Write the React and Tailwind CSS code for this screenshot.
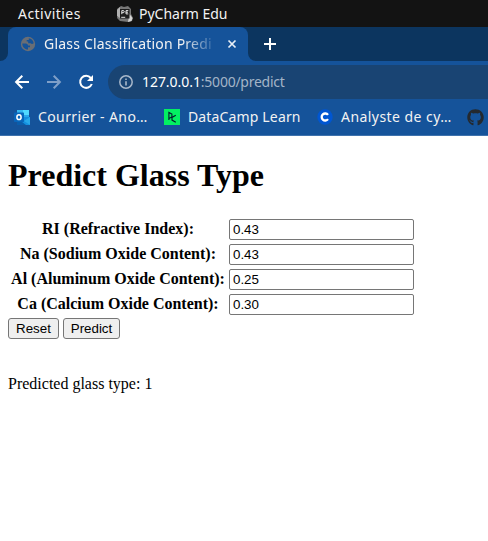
import React from 'react';
import { FaGithub } from 'react-icons/fa';

const UI = "font-['Noto_Sans',sans-serif]";

function PyCharmIcon() {
  return (
    <svg width="16" height="16" viewBox="0 0 16 16">
      <path d="M0 3 4 0l3 1 4-1 3 3v5l2 4-1 3-4 1-8-1-3-3 1-5z" fill="#777" />
      <path d="M12.500 8l3 4-1 3-3.500 1z" fill="#d6d6d6" />
      <path d="M0 4l3-3v11l-3-2z" fill="#b0b0b0" />
      <rect x="3" y="3" width="9.500" height="9.500" fill="#1c1c1c" />
      <path d="M4.800 8.200V4.600h1.400a1 1 0 0 1 0 2.100H4.800M11.300 4.600H9v3.300h2.300M9 6.200h2" stroke="#e5e5e5" fill="none" />
      <path d="M4.200 11.300h4" stroke="#e5e5e5" />
    </svg>
  );
}

function GlobeIcon() {
  return (
    <svg width="16" height="16" viewBox="0 0 16 16">
      <circle cx="8" cy="8" r="7.200" fill="#6a6e75" />
      <path d="M2.300 7.500h3.400c1.600 0 2.300 1 2.300 2h2v1.700H8v2.300C4.800 13.500 2.300 11 2.300 7.500zM8.800 2.300c2.500.3 4.500 2.300 4.900 4.900-.8.900-2.500.9-3 .1H8.200V5.500H6.700V4h2.100z" fill="#15539a" />
    </svg>
  );
}

function OutlookIcon() {
  return (
    <svg width="17" height="16" viewBox="0 0 17 16">
      <g transform="translate(0 1)">
        <path d="M3 0h12v9H3z" fill="#28a8ea" />
        <path d="M9 0h6v5H9z" fill="#50d9ff" />
        <path d="M3 0h6v5H3z" fill="#35b8f1" />
        <path d="M3 7h13v8H3z" fill="#1490df" />
        <path d="M16 7v8l-6-4z" fill="#28a8ea" />
        <path d="M3 8l9 7H3z" fill="#0a5dab" />
        <rect x="0" y="2.500" width="10" height="9.500" rx=".7" fill="#0866bb" />
        <ellipse cx="5" cy="7.200" rx="2.100" ry="2.400" fill="none" stroke="#fff" strokeWidth="1.500" />
      </g>
    </svg>
  );
}

function DataCampIcon() {
  return (
    <svg width="16" height="16" viewBox="0 0 16 16">
      <path d="M0 0h16v16H0z" fill="#03ef62" />
      <path d="M4.900 11V3.500l3 1.500v3L4.900 9.500M11.800 6.200 8 8.400v2.700l3.800 2.100" fill="none" stroke="#05192d" strokeWidth="1.100" />
    </svg>
  );
}

function Bookmark({ icon, label, className }) {
  return (
    <div className="flex shrink-0 items-center">
      {icon}
      <span className={`pb-0.5 ${className}`}>{label}</span>
    </div>
  );
}

const fields = [
  ['RI (Refractive Index):', '0.43'],
  ['Na (Sodium Oxide Content):', '0.43'],
  ['Al (Aluminum Oxide Content):', '0.25'],
  ['Ca (Calcium Oxide Content):', '0.30'],
];

export default function App() {
  return (
    <div className="h-[541px] w-[488px] overflow-hidden bg-white">
      <div className={`${UI} text-[#f2f2f2]`}>
        <div className="flex h-[27px] items-center bg-[#131313] pl-[18px] text-[14px]">
          <span className="w-[99px] tracking-[0.45px]">Activities</span>
          <PyCharmIcon />
          <span className="ml-[6px]">PyCharm Edu</span>
        </div>

        <div className="flex h-[34px] bg-[#0c355f]">
          <div className="w-2 bg-[#15539a]">
            <div className="h-full rounded-br-lg bg-[#0c355f]" />
          </div>
          <div className="flex w-[240px] items-center rounded-t-lg bg-[#15539a] pl-3">
            <GlobeIcon />
            <div className="ml-2 w-[172px] whitespace-nowrap pb-px text-[14px] tracking-[0.2px] [mask-image:linear-gradient(to_right,black_138px,transparent_174px)]">
              Glass Classification Predi
            </div>
            <svg className="ml-[11px]" width="10" height="10" viewBox="0 0 10 10">
              <path d="M1.500 1.500l7 7M8.500 1.500l-7 7" stroke="#e8eef6" strokeWidth="1.700" />
            </svg>
          </div>
          <div className="flex-1 bg-[#15539a]">
            <div className="flex h-full items-center rounded-bl-lg bg-[#0c355f] pl-4">
              <svg width="12" height="12" viewBox="0 0 12 12">
                <path d="M6 0v12M0 6h12" stroke="#fff" strokeWidth="2" />
              </svg>
            </div>
          </div>
        </div>

        <div className="flex h-[38px] items-end bg-[#15539a]">
          <div className="flex h-[34px] w-[108px] items-center gap-4 pl-[14px]">
            <svg width="16" height="16" viewBox="0 0 16 16" fill="none" stroke="#fff" strokeWidth="2">
              <path d="M15 8H2.500M8.300 1.800 2.100 8l6.200 6.200" />
            </svg>
            <svg width="16" height="16" viewBox="0 0 16 16" fill="none" stroke="#7f9fc8" strokeWidth="2">
              <path d="M1 8h12.500M7.700 1.800 13.900 8l-6.200 6.200" />
            </svg>
            <svg width="16" height="16" viewBox="0 0 16 16">
              <path d="M12.800 4A6 6 0 1 0 13.800 10" fill="none" stroke="#fff" strokeWidth="2" />
              <path d="M15 1v6H9z" fill="#fff" />
            </svg>
          </div>
          <div className="flex h-[34px] flex-1 items-center rounded-l-full bg-[#194473] pl-[11px]">
            <svg width="14" height="14" viewBox="0 0 14 14">
              <circle cx="7" cy="7" r="6.200" fill="none" stroke="#a9b8ca" strokeWidth="1.500" />
              <path d="M7 6.200v4.300M7 3.400v1.600" stroke="#a9b8ca" strokeWidth="1.600" />
            </svg>
            <span className="ml-[9px] pb-px text-[14px] tracking-[-0.25px] text-[#a3b4c7]">
              <span className="tracking-[-0.05px] text-white">127.0.0.1</span>:5000/predict
            </span>
          </div>
        </div>

        <div className="flex h-[37px] items-center overflow-hidden whitespace-nowrap border-b border-[#3f72ad] bg-[#15539a] pl-[14px] text-[14px]">
          <Bookmark icon={<OutlookIcon />} label="Courrier - Ano…" className="ml-[7px] w-[126px] tracking-[0.4px]" />
          <Bookmark icon={<DataCampIcon />} label="DataCamp Learn" className="ml-2 w-[129px] tracking-[0.15px]" />
          <Bookmark
            icon={
              <svg width="16" height="16" viewBox="0 0 16 16">
                <circle cx="8" cy="8" r="7.700" fill="#0056d2" />
                <path d="M11 5.900A3.500 3.500 0 1 0 11 10.100" fill="none" stroke="#fff" strokeWidth="2.300" />
              </svg>
            }
            label="Analyste de cy…"
            className="ml-2 w-[126px] tracking-[0.45px]"
          />
          <FaGithub size={17} color="#24292f" className="shrink-0" />
        </div>
      </div>

      <main className="px-2 pt-[21px] font-['Liberation_Serif',serif] text-[16px] leading-[18px] text-black">
        <h1 className="text-[32px] font-bold leading-[37px]">Predict Glass Type</h1>
        <form className="mt-[25px]">
          <div className="grid w-fit grid-cols-[220px_185px] gap-x-px gap-y-1">
            {fields.map(([label, value]) => (
              <React.Fragment key={label}>
                <label className="flex items-center justify-center whitespace-nowrap pb-[2px] font-bold">{label}</label>
                <input
                  defaultValue={value}
                  className="h-[21px] w-[185px] rounded-[2px] border border-[#767676] bg-white px-[3px] font-['Liberation_Sans',sans-serif] text-[13.333px] leading-[15px] text-black"
                />
              </React.Fragment>
            ))}
          </div>
          <div className="mt-[3px] flex gap-1 font-['Liberation_Sans',sans-serif] text-[13.333px] leading-[15px]">
            <button type="reset" className="h-[21px] w-[51px] rounded-[3px] border border-[#767676] bg-[#efefef]">Reset</button>
            <button type="button" className="h-[21px] w-[57px] rounded-[3px] border border-[#767676] bg-[#efefef]">Predict</button>
          </div>
        </form>
        <p className="mt-9">Predicted glass type: 1</p>
      </main>
    </div>
  );
}
